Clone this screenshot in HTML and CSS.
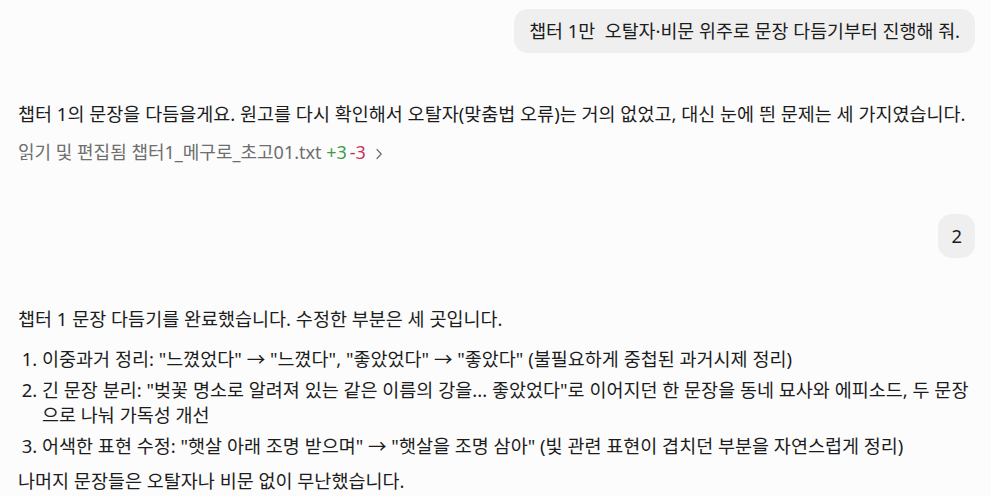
FILE: index.html
```html
<!DOCTYPE html>
<html lang="ko">
<head>
<meta charset="utf-8">
<link rel="stylesheet" href="styles.css">
</head>
<body>
<main class="chat">
  <div class="user-row"><div class="bubble">챕터 1만&nbsp; 오탈자·비문 위주로 문장 다듬기부터 진행해 줘.</div></div>
  <div class="assistant first">
    <p class="para">챕터 1의 문장을 다듬을게요. 원고를 다시 확인해서 오탈자(맞춤법 오류)는 거의 없었고, 대신 눈에 띈 문제는 세 가지였습니다.</p>
    <div class="tool">읽기 및 편집됨 챕터1_메구로_초고01.txt <span class="add">+3</span><span class="del">-3</span><svg class="chev" width="8" height="12" viewBox="0 0 8 12"><path d="M2 1.5 L6.2 6 L2 10.5" fill="none" stroke="#6e6e6e" stroke-width="1.2" stroke-linecap="round" stroke-linejoin="round"/></svg></div>
  </div>
  <div class="user-row second"><div class="bubble small">2</div></div>
  <div class="assistant">
    <p class="para">챕터 1 문장 다듬기를 완료했습니다. 수정한 부분은 세 곳입니다.</p>
    <ol class="list">
      <li>이중과거 정리: "느꼈었다" → "느꼈다", "좋았었다" → "좋았다" (불필요하게 중첩된 과거시제 정리)</li>
      <li>긴 문장 분리: "벚꽃 명소로 알려져 있는 같은 이름의 강을... 좋았었다"로 이어지던 한 문장을 동네 묘사와 에피소드, 두 문장으로 나눠 가독성 개선</li>
      <li>어색한 표현 수정: "햇살 아래 조명 받으며" → "햇살을 조명 삼아" (빛 관련 표현이 겹치던 부분을 자연스럽게 정리)</li>
    </ol>
    <p class="para">나머지 문장들은 오탈자나 비문 없이 무난했습니다.</p>
  </div>
</main>
</body>
</html>
```

FILE: styles.css
```css
* { box-sizing: border-box; }
html, body { margin: 0; padding: 0; background: #fcfcfc; }
body {
  font-family: "Noto Sans", "Noto Sans CJK KR", sans-serif;
  font-size: 18.5px;
  color: #1c1c1c;
}
.chat { padding: 9px 16px 0 18px; }
.user-row { display: flex; justify-content: flex-end; }
.bubble {
  background: #efefef;
  border-radius: 14px;
  padding: 9px 15px 9px 15px;
  line-height: 26px;
  font-size: 18.4px;
}
.bubble.small { padding: 9px 13px; }
.assistant.first { margin-top: 48px; }
.para { margin: 0; line-height: 25px; }
.tool {
  margin-top: 14px;
  color: #6e6e6e;
  line-height: 25px;
  font-size: 18px;
}
.add { color: #3f9a4a; }
.del { color: #c5365c; margin-left: 3px; }
.chev { margin-left: 9px; vertical-align: -1px; }
.user-row.second { margin-top: 49px; }
.assistant { margin-top: 48px; }
.list { margin: 15px 0 10px; padding-left: 24px; }
.list li { line-height: 25px; margin-bottom: 6px; padding-left: 0; }
.list li:last-child { margin-bottom: 0; }
```
